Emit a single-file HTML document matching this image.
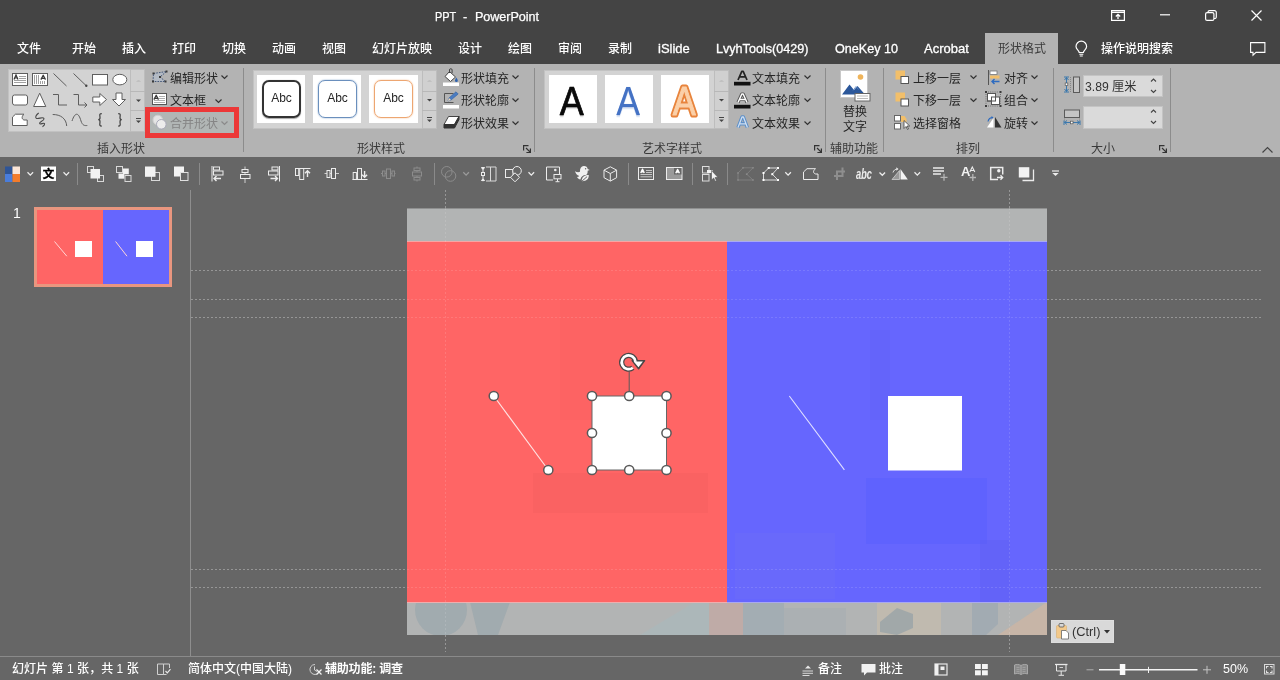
<!DOCTYPE html>
<html lang="zh-CN">
<head>
<meta charset="utf-8">
<title>PPT - PowerPoint</title>
<style>
*{box-sizing:border-box;margin:0;padding:0}
html,body{width:1280px;height:680px;overflow:hidden;background:#666;}
body{position:relative;font-family:"Liberation Sans","Noto Sans CJK SC",sans-serif;font-size:13px;color:#fff;}
.abs,.abs *{position:absolute}
.t{position:absolute;white-space:nowrap;line-height:20px;height:20px;will-change:transform}
#titlebar{position:absolute;left:0;top:0;width:1280px;height:64px;background:#444}
#ribbon{position:absolute;left:0;top:64px;width:1280px;height:93px;background:#b3b3b3;color:#262626}
#ribbon .t{font-size:12px}
#tabs .t,#status .t{font-weight:500}
.sep{position:absolute;width:1px;background:#8c8c8c;top:4px;height:84px}
.glabel{position:absolute;will-change:transform;top:75px;font-size:12px;color:#3a3a3a;white-space:nowrap;transform:translateX(-50%);line-height:20px}
.wa{position:absolute;top:11px;width:48px;height:48px;font-size:40px;line-height:50px;text-align:center}
.chev{position:absolute;width:7px;height:4px}
svg{position:absolute;overflow:visible}
#qat{position:absolute;left:0;top:157px;width:1280px;height:33px}
.qsep{position:absolute;width:1px;background:#8a8a8a;top:6px;height:22px}
#status{position:absolute;left:0;top:656px;width:1280px;height:24px;border-top:1px solid #8a8a8a;font-size:13px}
#status .t{top:2px}
</style>
</head>
<body>

<!-- ============ TITLE BAR + TABS ============ -->
<div id="titlebar">
  <div class="t" id="wtitle" style="-webkit-text-stroke:.25px #fff;left:0;top:7px;font-size:12.600px;width:600px"><span style="position:absolute;left:434.500px;transform:scaleX(.87);transform-origin:left">PPT</span><span style="position:absolute;left:463px">-</span><span style="position:absolute;left:475px;letter-spacing:-.05px">PowerPoint</span></div>
<!--WCS-->
  <svg style="left:1111px;top:10px" width="14" height="11" viewBox="0 0 14 11" fill="none" stroke="#fff">
    <rect x=".6" y=".6" width="12.800" height="9.800" stroke-width="1.200"/><path d="M.6 2.300h12.800" stroke-width="1.400"/>
    <path d="M7 9V4.500M4.800 6.500L7 4.300l2.200 2.200" stroke-width="1.300"/>
  </svg>
  <svg style="left:1160px;top:14px" width="10" height="2" viewBox="0 0 10 2"><path d="M0 .8h10" stroke="#fff" stroke-width="1.200"/></svg>
  <svg style="left:1205px;top:10px" width="12" height="11" viewBox="0 0 12 11" fill="none" stroke="#fff" stroke-width="1.200">
    <rect x=".6" y="2.600" width="8.300" height="7.800" rx="1.500"/>
    <path d="M3 2.500V2A1.500 1.500 0 0 1 4.500 .6H9.500A1.800 1.800 0 0 1 11.300 2.400V7A1.500 1.500 0 0 1 9.800 8.500H9"/>
  </svg>
  <svg style="left:1251px;top:10px" width="11" height="11" viewBox="0 0 11 11" fill="none" stroke="#fff" stroke-width="1.200"><path d="M.5 .5l10 10M10.500 .5l-10 10"/></svg>
<!--WCE-->
  <div id="tabs">
    <div class="t" style="left:17px;top:39px;font-size:12px">文件</div>
    <div class="t" style="left:72px;top:39px;font-size:12px">开始</div>
    <div class="t" style="left:122px;top:39px;font-size:12px">插入</div>
    <div class="t" style="left:172px;top:39px;font-size:12px">打印</div>
    <div class="t" style="left:222px;top:39px;font-size:12px">切换</div>
    <div class="t" style="left:272px;top:39px;font-size:12px">动画</div>
    <div class="t" style="left:322px;top:39px;font-size:12px">视图</div>
    <div class="t" style="left:372px;top:39px;font-size:12px">幻灯片放映</div>
    <div class="t" style="left:458px;top:39px;font-size:12px">设计</div>
    <div class="t" style="left:508px;top:39px;font-size:12px">绘图</div>
    <div class="t" style="left:558px;top:39px;font-size:12px">审阅</div>
    <div class="t" style="left:608px;top:39px;font-size:12px">录制</div>
    <div class="t" style="left:658px;top:38.500px;-webkit-text-stroke:.3px #fff">iSlide</div>
    <div class="t" style="left:716px;top:38.500px;font-size:12.600px;-webkit-text-stroke:.3px #fff">LvyhTools(0429)</div>
    <div class="t" style="left:835px;top:38.500px;font-size:12.600px;-webkit-text-stroke:.3px #fff">OneKey 10</div>
    <div class="t" style="left:924px;top:38.500px;-webkit-text-stroke:.3px #fff">Acrobat</div>
    <div style="position:absolute;left:985px;top:33px;width:73px;height:31px;background:#b3b3b3"></div>
    <div class="t" style="left:998px;top:39px;font-size:12px;color:#3a3a3a;font-weight:400">形状格式</div>
    <div class="t" style="left:1101px;top:39px;font-size:12px">操作说明搜索</div>
<!--TIS-->
    <svg style="left:1075px;top:41px" width="13" height="16" viewBox="0 0 13 16" fill="none" stroke="#fff" stroke-width="1.200">
      <path d="M4.200 11.500C4.200 9.500 1 8.500 1 5.500A5.300 5.300 0 0 1 11.600 5.500C11.600 8.500 8.400 9.500 8.400 11.500Z"/>
      <path d="M4.300 13.300h4M4.800 15h3" stroke-width="1.100"/>
    </svg>
    <svg style="left:1250px;top:42px" width="16" height="14" viewBox="0 0 16 14" fill="none" stroke="#fff" stroke-width="1.100">
      <path d="M.6 .6h14.300v9.800H6L3 13.200V10.400H.6Z" stroke-linejoin="miter"/>
    </svg>
<!--TIE-->
  </div>
</div>

<!-- ============ RIBBON ============ -->
<div id="ribbon">
<!--G1S-->
  <!-- group 1: insert shapes -->
  <div style="position:absolute;left:8px;top:5px;width:137px;height:63px;background:#d3d3d3;border:1px solid #c2c2c2"></div>
  <div style="position:absolute;left:130px;top:5px;width:15px;height:63px;background:#d0d0d0;border:1px solid #bdbdbd"></div>
  <div style="position:absolute;left:130px;top:27px;width:15px;height:1px;background:#b8b8b8"></div>
  <div style="position:absolute;left:130px;top:46px;width:15px;height:1px;background:#b8b8b8"></div>
  <svg style="left:0;top:0" width="150" height="75" viewBox="0 0 150 75" fill="none" stroke="#5e5e5e" stroke-width="1">
    <!-- row1 -->
    <rect x="12.5" y="9.5" width="15" height="12" fill="#fff"/>
    <path d="M19 12.5h7M19 14.5h7M14 16.5h12M14 18.5h12" stroke="#888" stroke-width=".8"/>
    <path d="M14 15.5l2-4.5 2 4.5M14.8 14h2.4" stroke="#333" stroke-width="1.2"/>
    <rect x="32.500" y="9.500" width="15" height="12" fill="#fff"/>
    <path d="M34.500 11v9M36.500 11v9M38.500 11v9M40.500 17v3M42.500 17v3M44.500 17v3" stroke="#888" stroke-width=".8"/>
    <path d="M40.900 15.600l2.300-4.300 2.300 4.300M41.900 14.300h2.600" stroke="#3a3a3a" stroke-width="1.300" stroke-linejoin="round"/>
    <path d="M53.500 9.500L66.500 22"/>
    <path d="M73.500 9.500L86 21.500"/><circle cx="86.300" cy="21.800" r="1.200" fill="#444" stroke="none"/>
    <rect x="92.500" y="10.500" width="15" height="10.500" fill="#fff"/>
    <ellipse cx="119.800" cy="15.600" rx="7" ry="5.300" fill="#fff"/>
    <!-- row2 -->
    <rect x="12.500" y="31" width="15" height="10" rx="2" fill="#fff"/>
    <path d="M39.700 29.200L45.800 42.500H33.600Z" fill="#fff"/>
    <path d="M53 30.500h5.500v10.500h8.500"/>
    <path d="M73.500 30.500h5v10.500h8M84.500 38.500l2.500 2.500-2.500 2.500"/>
    <path d="M92.800 33h7v-3.500l6.700 6-6.700 6V38h-7Z" fill="#fff"/>
    <path d="M116 29h6v6.500h3.500l-6.500 6.500-6.500-6.500H116Z" fill="#fff"/>
    <!-- row3 -->
    <path d="M12.500 53l3-2.800h8.500c-2.500 2-2.500 5 0 5.800h3.200v5.500H12.500Z" fill="#fff" stroke-linejoin="round"/>
    <path d="M38.700 49C36 51 35 53 36.200 54.200C38 55.600 43 52.300 44 54.500C44.600 57 39 57.600 39.600 59.600C40.200 61 44 58.200 44.600 59.700C44.900 60.600 43.600 62 42.500 62.700" stroke="#4a4a4a" stroke-width="1.100"/>
    <path d="M52.700 50.500c8 0 13.500 4 14 11.500"/>
    <path d="M72 57c3-9 6.500-9 9 0c1.500 4.500 3.500 4.800 6.300 4.500"/>
    <path stroke="#444" stroke-width="1.250" d="M101.800 49.500c-3 0-1.800 2-1.800 4.200c0 1.500-.8 2-1.800 2c1 0 1.800.5 1.800 2c0 2.200-1.200 4.300 1.800 4.300"/>
    <path stroke="#444" stroke-width="1.250" d="M118.200 49.500c3 0 1.800 2 1.800 4.200c0 1.500.8 2 1.800 2c-1 0-1.800.5-1.800 2c0 2.200 1.200 4.300-1.800 4.300"/>
    <!-- scroll buttons -->
    <path d="M136.500 18l2-2 2 2" stroke="#c0c0c0" fill="#c0c0c0"/>
    <path d="M136 35.500h5l-2.500 2.500Z" fill="#444" stroke="none"/>
    <path d="M136 54.500h5" stroke="#444"/><path d="M136 56.500h5l-2.500 2.500Z" fill="#444" stroke="none"/>
  </svg>
  <!-- edit shape -->
  <svg style="left:151px;top:6px" width="18" height="14" viewBox="0 0 18 14" fill="none">
    <path d="M2 11.500L2.500 3.500L15.500 1.500L9 7L14.500 11.500Z" fill="#b3bac4" stroke="#44587a" stroke-width="1" stroke-dasharray="1.600 1.100"/>
    <g fill="#3a3a3a"><rect x="1" y="10.500" width="2" height="2"/><rect x="1.500" y="2.500" width="2" height="2"/><rect x="14.500" y=".5" width="2" height="2"/><rect x="8" y="6" width="2" height="2"/><rect x="13.500" y="10.500" width="2" height="2"/></g>
  </svg>
  <div class="t" style="left:170px;top:5px">编辑形状</div>
  <svg class="chev" style="left:221px;top:11px" viewBox="0 0 7 4"><path d="M.5 .5l3 3 3-3" fill="none" stroke="#333" stroke-width="1.200"/></svg>
  <!-- text box -->
  <svg style="left:152px;top:29px" width="15" height="12" viewBox="0 0 15 12" fill="none">
    <rect x=".5" y=".5" width="14" height="11" fill="#fff" stroke="#555"/>
    <path d="M7 3.500h6M7 5.500h6M2 7.500h11M2 9.500h11" stroke="#999" stroke-width=".8"/>
    <path d="M1.900 6.600l2.300-4.300 2.300 4.300M2.900 5.300h2.600" stroke="#3a3a3a" stroke-width="1.300" stroke-linejoin="round"/>
  </svg>
  <div class="t" style="left:170px;top:27px">文本框</div>
  <svg class="chev" style="left:215px;top:35px" viewBox="0 0 7 4"><path d="M.5 .5l3 3 3-3" fill="none" stroke="#333" stroke-width="1.200"/></svg>
  <!-- merge shapes (disabled) + red highlight -->
  <div style="position:absolute;left:145px;top:43px;width:94px;height:31px;border:5px solid #ec3838;background:#b1b6b5"></div>
  <svg style="left:152px;top:50px" width="16" height="16" viewBox="0 0 16 16" fill="none">
    <circle cx="5.800" cy="6" r="4.800" fill="#e4e4e4" stroke="#cfcfcf"/>
    <circle cx="9.300" cy="10.300" r="4.800" fill="#ececec" stroke="#a9a9b9"/>
  </svg>
  <div class="t" style="left:170px;top:50px;color:#858585">合并形状</div>
  <svg class="chev" style="left:221px;top:57px" viewBox="0 0 7 4"><path d="M.5 .5l3 3 3-3" fill="none" stroke="#8a8a8a" stroke-width="1.200"/></svg>
  <div class="glabel" style="left:121px">插入形状</div>
  <div class="sep" style="left:243px"></div>
<!--G1E-->
<!--G2S-->
  <!-- group 2: shape styles -->
  <div style="position:absolute;left:253px;top:6px;width:184px;height:59px;background:#d3d3d3;border:1px solid #c2c2c2"></div>
  <div style="position:absolute;left:422px;top:6px;width:15px;height:59px;background:#d0d0d0;border:1px solid #bdbdbd"></div>
  <div style="position:absolute;left:422px;top:27px;width:15px;height:1px;background:#b8b8b8"></div>
  <div style="position:absolute;left:422px;top:46px;width:15px;height:1px;background:#b8b8b8"></div>
  <div style="position:absolute;left:257px;top:11px;width:48px;height:48px;background:#fff"></div>
  <div style="position:absolute;left:313px;top:11px;width:48px;height:48px;background:#fff"></div>
  <div style="position:absolute;left:369px;top:11px;width:48.500px;height:48px;background:#fff"></div>
  <div style="position:absolute;left:262px;top:16px;width:39px;height:38px;border:2px solid #333;border-radius:7px;box-shadow:0 .5px 1px rgba(0,0,0,.35)"></div>
  <div style="position:absolute;left:318px;top:16px;width:39px;height:38px;border:1.600px solid #6a8fbd;box-shadow:0 0 1.500px #5b86b8;border-radius:7px"></div>
  <div style="position:absolute;left:374px;top:16px;width:39px;height:38px;border:1.600px solid #eda671;box-shadow:0 0 1.500px #f0a870;border-radius:7px"></div>
  <div class="t" style="left:262px;top:24px;width:39px;text-align:center;color:#262626;font-size:12px">Abc</div>
  <div class="t" style="left:318px;top:24px;width:39px;text-align:center;color:#262626;font-size:12px">Abc</div>
  <div class="t" style="left:374px;top:24px;width:39px;text-align:center;color:#262626;font-size:12px">Abc</div>
  <svg style="left:422px;top:0" width="15" height="70" viewBox="0 0 15 70" fill="none">
    <path d="M5.500 18l2-2 2 2" stroke="#c0c0c0" fill="#c0c0c0"/>
    <path d="M5 35h5l-2.500 2.500Z" fill="#444"/>
    <path d="M5 53.500h5" stroke="#444"/><path d="M5 55.500h5l-2.500 2.500Z" fill="#444"/>
  </svg>
  <!-- shape fill -->
  <svg style="left:443px;top:4px" width="17" height="18" viewBox="0 0 17 18" fill="none">
    <path d="M6.500 3.500L12.500 9L7.500 13.500L2 8.500Z" fill="#fff" stroke="#444" stroke-linejoin="round"/>
    <path d="M6.500 5V2a1.300 1.300 0 0 1 2.600 0v3" stroke="#444"/>
    <path d="M13.300 9.500c1.200 1.800 1.500 2.500 1.500 3.200a1.400 1.400 0 0 1-2.800 0c0-.8.400-1.500 1.300-3.200Z" fill="#2f62ad"/>
    <rect x="0" y="14.500" width="16" height="3.500" fill="#fff"/>
  </svg>
  <div class="t" style="left:461px;top:5px">形状填充</div>
  <svg class="chev" style="left:512px;top:11px" viewBox="0 0 7 4"><path d="M.5 .5l3 3 3-3" fill="none" stroke="#333" stroke-width="1.200"/></svg>
  <!-- shape outline -->
  <svg style="left:443px;top:27px" width="17" height="18" viewBox="0 0 17 18" fill="none">
    <path d="M10.500 2.500H1.500v9h9" stroke="#555"/>
    <path d="M5 10l1-3L13 .8 15.200 3 8 9Z" fill="#4a7cc2" stroke="#2d5fa3" stroke-width=".6"/>
    <path d="M5 10l1-3 2 2Z" fill="#f4d9b8"/>
    <rect x="0" y="14" width="16" height="3.500" fill="#fff"/>
  </svg>
  <div class="t" style="left:461px;top:27px">形状轮廓</div>
  <svg class="chev" style="left:512px;top:34px" viewBox="0 0 7 4"><path d="M.5 .5l3 3 3-3" fill="none" stroke="#333" stroke-width="1.200"/></svg>
  <!-- shape effects -->
  <svg style="left:443px;top:51px" width="17" height="15" viewBox="0 0 17 15" fill="none">
    <path d="M5.500 1.500H16l-4.500 8H1Z" fill="#fff" stroke="#444" stroke-linejoin="round"/>
    <path d="M1 9.500h10.500l4.500-8v3l-4.500 8.500H1Z" fill="#333" stroke="#333" stroke-linejoin="round"/>
  </svg>
  <div class="t" style="left:461px;top:50px">形状效果</div>
  <svg class="chev" style="left:512px;top:57px" viewBox="0 0 7 4"><path d="M.5 .5l3 3 3-3" fill="none" stroke="#333" stroke-width="1.200"/></svg>
  <div class="glabel" style="left:381px">形状样式</div>
  <svg style="left:523px;top:81px" width="8" height="8" viewBox="0 0 8 8" fill="none" stroke="#333" stroke-width="1.200"><path d="M.6 5.500V.6H5.500M3 3l4.200 4.200M7.400 3.500v4h-4"/></svg>
  <div class="sep" style="left:534px"></div>
<!--G2E-->
<!--G3S-->
  <!-- group 3: wordart styles -->
  <div style="position:absolute;left:544px;top:6px;width:185px;height:59px;background:#d3d3d3;border:1px solid #c2c2c2"></div>
  <div style="position:absolute;left:714px;top:6px;width:15px;height:59px;background:#d0d0d0;border:1px solid #bdbdbd"></div>
  <div style="position:absolute;left:714px;top:27px;width:15px;height:1px;background:#b8b8b8"></div>
  <div style="position:absolute;left:714px;top:46px;width:15px;height:1px;background:#b8b8b8"></div>
  <div style="position:absolute;left:549px;top:11px;width:48px;height:48px;background:#fff"></div>
  <div style="position:absolute;left:605px;top:11px;width:48px;height:48px;background:#fff"></div>
  <div style="position:absolute;left:661px;top:11px;width:48px;height:48px;background:#fff"></div>
  <svg style="left:549px;top:11px;will-change:transform" width="160" height="48" viewBox="0 0 160 48" font-family="Liberation Sans, sans-serif" font-size="40" text-anchor="middle">
    <defs><filter id="sh1" x="-20%" y="-20%" width="140%" height="150%"><feGaussianBlur stdDeviation=".8"/></filter></defs>
    <text x="22.900" y="40.600" fill="#000" opacity=".35" filter="url(#sh1)" transform="translate(22.600 0) scale(.9 1) translate(-22.600 0)">A</text>
    <text x="22.900" y="40" fill="#0a0a0a" stroke="#0a0a0a" stroke-width=".7" transform="translate(22.600 0) scale(.9 1) translate(-22.600 0)">A</text>
    <text x="79.200" y="41" font-size="41" fill="#4472c4" opacity=".5" filter="url(#sh1)" transform="translate(79 0) scale(.87 1) translate(-79 0)">A</text>
    <text x="79.200" y="40" font-size="41" fill="#4472c4" transform="translate(79 0) scale(.87 1) translate(-79 0)">A</text>
    <text x="135.200" y="40.400" fill="#e8843c" stroke="#e8843c" stroke-width="5.200" stroke-linejoin="round" transform="translate(135 0) scale(.86 1) translate(-135 0)">A</text>
    <text x="135.200" y="40.400" fill="#fbd0a8" stroke="#fbd0a8" stroke-width="1" stroke-linejoin="round" transform="translate(135 0) scale(.86 1) translate(-135 0)">A</text>
  </svg>
  <svg style="left:714px;top:0" width="15" height="70" viewBox="0 0 15 70" fill="none">
    <path d="M5.500 18l2-2 2 2" stroke="#c0c0c0" fill="#c0c0c0"/>
    <path d="M5 35h5l-2.500 2.500Z" fill="#444"/>
    <path d="M5 53.500h5" stroke="#444"/><path d="M5 55.500h5l-2.500 2.500Z" fill="#444"/>
  </svg>
  <!-- text fill -->
  <svg style="left:734px;top:5px" width="17" height="17" viewBox="0 0 17 17" fill="none">
    <path d="M4 11L7.800 2.300h1.400L13 11M5.600 7.900h5.800" stroke="#222" stroke-width="1.700" stroke-linejoin="round"/>
    <rect x="0" y="12.800" width="16.500" height="3.700" fill="#111"/>
  </svg>
  <div class="t" style="left:752px;top:5px">文本填充</div>
  <svg class="chev" style="left:804px;top:11px" viewBox="0 0 7 4"><path d="M.5 .5l3 3 3-3" fill="none" stroke="#333" stroke-width="1.200"/></svg>
  <!-- text outline -->
  <svg style="left:734px;top:28px" width="17" height="17" viewBox="0 0 17 17" fill="none">
    <path d="M4 10.500L7.800 2h1.400L13 10.500M5.800 7.500h5.400" stroke="#555" stroke-width="3.200" stroke-linejoin="round"/>
    <path d="M4 10.500L7.800 2h1.400L13 10.500M5.800 7.500h5.400" stroke="#fff" stroke-width="1.400" stroke-linejoin="round"/>
    <rect x="0" y="12.800" width="16.500" height="3.700" fill="#111"/>
  </svg>
  <div class="t" style="left:752px;top:27px">文本轮廓</div>
  <svg class="chev" style="left:804px;top:34px" viewBox="0 0 7 4"><path d="M.5 .5l3 3 3-3" fill="none" stroke="#333" stroke-width="1.200"/></svg>
  <!-- text effects -->
  <svg style="left:735px;top:50px" width="16" height="17" viewBox="0 0 16 17" fill="none">
    <path d="M3 13.500L7 3h1.400L12.400 13.500M4.800 9.800h5.800" stroke="#4b88cc" stroke-width="3.400" stroke-linejoin="round" opacity=".85"/>
    <path d="M3 13.500L7 3h1.400L12.400 13.500M4.800 9.800h5.800" stroke="#cfdff2" stroke-width="1.300" stroke-linejoin="round"/>
  </svg>
  <div class="t" style="left:752px;top:50px">文本效果</div>
  <svg class="chev" style="left:804px;top:57px" viewBox="0 0 7 4"><path d="M.5 .5l3 3 3-3" fill="none" stroke="#333" stroke-width="1.200"/></svg>
  <div class="glabel" style="left:672px">艺术字样式</div>
  <svg style="left:814px;top:81px" width="8" height="8" viewBox="0 0 8 8" fill="none" stroke="#333" stroke-width="1.200"><path d="M.6 5.500V.6H5.500M3 3l4.200 4.200M7.400 3.500v4h-4"/></svg>
  <div class="sep" style="left:825px"></div>
<!--G3E-->
<!--G4S-->
  <!-- group 4: accessibility -->
  <svg style="left:840px;top:6px" width="31" height="32" viewBox="0 0 31 32" fill="none">
    <rect x=".5" y=".5" width="27" height="27" fill="#fff" stroke="#c8c8c8"/>
    <circle cx="20.500" cy="7" r="2.800" fill="#efb45b"/>
    <path d="M2 24.500L9.500 14.500L14 20L17.500 16L25 24.500Z" fill="#2b579a"/>
    <path d="M13 20.500l3-4 2.500 3" stroke="#5b86c4" stroke-width=".8" fill="none"/>
    <rect x="15" y="23.500" width="15" height="7.500" fill="#fff" stroke="#666"/>
    <path d="M17 26h11M17 28.500h11" stroke="#aaa" stroke-width=".8"/>
  </svg>
  <div class="t" style="left:843px;top:38px">替换</div>
  <div class="t" style="left:843px;top:53px">文字</div>
  <div class="glabel" style="left:854px">辅助功能</div>
  <div class="sep" style="left:883px"></div>
<!--G4E-->
<!--G5S-->
  <!-- group 5: arrange -->
  <svg style="left:894px;top:5px" width="16" height="16" viewBox="0 0 16 16" fill="none">
    <rect x="1.500" y="1.500" width="9.500" height="9" fill="#f2bf6a"/>
    <rect x="7" y="7.500" width="7.500" height="7" fill="#fff" stroke="#555"/>
  </svg>
  <div class="t" style="left:913px;top:5px">上移一层</div>
  <svg class="chev" style="left:970px;top:11px" viewBox="0 0 7 4"><path d="M.5 .5l3 3 3-3" fill="none" stroke="#333" stroke-width="1.200"/></svg>
  <svg style="left:894px;top:27px" width="16" height="16" viewBox="0 0 16 16" fill="none">
    <rect x="1.500" y="1.500" width="9.500" height="9" fill="#f2bf6a"/>
    <rect x="7" y="8" width="7.500" height="7" fill="#fff" stroke="#555"/>
  </svg>
  <div class="t" style="left:913px;top:27px">下移一层</div>
  <svg class="chev" style="left:970px;top:34px" viewBox="0 0 7 4"><path d="M.5 .5l3 3 3-3" fill="none" stroke="#333" stroke-width="1.200"/></svg>
  <svg style="left:893px;top:50px" width="17" height="17" viewBox="0 0 17 17" fill="none">
    <rect x="1.500" y="1.500" width="6" height="5.500" fill="#fff" stroke="#666"/>
    <rect x="1.500" y="9.500" width="6" height="5.500" fill="#fff" stroke="#666"/>
    <path d="M8 2h3.500l2 3v3H8Z" fill="#f2bf6a"/>
    <path d="M11 6.500v8l2-2 1.500 3 1-.5-1.400-3h2.600Z" fill="#fff" stroke="#444" stroke-width=".8" stroke-linejoin="round"/>
  </svg>
  <div class="t" style="left:913px;top:50px">选择窗格</div>
  <!-- align -->
  <svg style="left:986px;top:5px" width="16" height="17" viewBox="0 0 16 17" fill="none">
    <path d="M2.500 1v15" stroke="#555"/>
    <rect x="4" y="2" width="7" height="3.500" fill="#fff" stroke="#777" stroke-width=".8"/>
    <rect x="4" y="6.500" width="9.500" height="3" fill="#f2bf6a"/>
    <path d="M13.500 12.500H6M8.500 10l-2.500 2.500 2.500 2.500" stroke="#2d6bc0" stroke-width="1.400"/>
  </svg>
  <div class="t" style="left:1004px;top:5px">对齐</div>
  <svg class="chev" style="left:1031px;top:11px" viewBox="0 0 7 4"><path d="M.5 .5l3 3 3-3" fill="none" stroke="#333" stroke-width="1.200"/></svg>
  <!-- group -->
  <svg style="left:985px;top:27px" width="18" height="17" viewBox="0 0 18 17" fill="none">
    <rect x="2.500" y="2.500" width="8" height="7.500" fill="#fff" stroke="#555"/>
    <rect x="6.500" y="6" width="8" height="7.500" fill="#fff" stroke="#555"/>
    <rect x="2.500" y="2.500" width="8" height="7.500" stroke="#555"/>
    <g fill="#3a3a3a"><rect x="0" y="0" width="2" height="2"/><rect x="14.500" y="0" width="2" height="2"/><rect x="0" y="14" width="2" height="2"/><rect x="14.500" y="14" width="2" height="2"/></g>
    <path d="M3 1h10.500M1 3v10M3 15h10.500M15.500 3v10" stroke="#555" stroke-width=".7" stroke-dasharray="1 1.200"/>
  </svg>
  <div class="t" style="left:1004px;top:27px">组合</div>
  <svg class="chev" style="left:1031px;top:34px" viewBox="0 0 7 4"><path d="M.5 .5l3 3 3-3" fill="none" stroke="#333" stroke-width="1.200"/></svg>
  <!-- rotate -->
  <svg style="left:986px;top:52px" width="17" height="13" viewBox="0 0 17 13" fill="none">
    <path d="M7.500 11.500H1L7.500 2Z" fill="#fff"/>
    <path d="M9 11.500h6.500L9 1Z" fill="#333"/>
    <path d="M2 5.500c.5-2.500 2.500-4 5-4" stroke="#2d6bc0" stroke-width="1.200"/><path d="M5.500 0l2 1.500-2 1.500Z" fill="#2d6bc0"/>
  </svg>
  <div class="t" style="left:1004px;top:50px">旋转</div>
  <svg class="chev" style="left:1031px;top:57px" viewBox="0 0 7 4"><path d="M.5 .5l3 3 3-3" fill="none" stroke="#333" stroke-width="1.200"/></svg>
  <div class="glabel" style="left:968px">排列</div>
  <div class="sep" style="left:1053px"></div>
<!--G5E-->
<!--G6S-->
  <!-- group 6: size -->
  <svg style="left:1063px;top:12px" width="18" height="18" viewBox="0 0 18 18" fill="none">
    <path d="M3.500 1.500v14M1 1h5M1 16h5" stroke="#3b78ad" stroke-width="1"/>
    <path d="M1.500 4l2-2.500 2 2.500M1.500 13l2 2.500 2-2.500" stroke="#3b78ad" stroke-width="1"/>
    <rect x="2.200" y="7" width="2.600" height="2.600" fill="#fff" stroke="#555" stroke-width=".7"/>
    <path d="M7.500 1v15.500" stroke="#888" stroke-dasharray="1 1"/>
    <rect x="10.500" y="1" width="6" height="15.500" fill="#c4c4c4" stroke="#5a5a5a"/>
  </svg>
  <div style="position:absolute;left:1082.500px;top:10.500px;width:80.500px;height:22.500px;background:#dadada;border:1px solid #c4c4c4"></div>
  <div class="t" style="left:1085px;top:13px;font-size:12.200px;color:#333">3.89 厘米</div>
  <svg style="left:1150px;top:13px" width="8" height="18" viewBox="0 0 8 18" fill="none" stroke="#444" stroke-width="1.100"><path d="M1 4.500l2.500-2.500 2.500 2.500M1 13l2.500 2.500 2.500-2.500"/></svg>
  <svg style="left:1063px;top:44px" width="18" height="18" viewBox="0 0 18 18" fill="none">
    <rect x="1.500" y="2" width="15" height="7.500" fill="#c4c4c4" stroke="#5a5a5a"/>
    <path d="M1.500 10.500v3M16.500 10.500v3" stroke="#888" stroke-dasharray="1 1"/>
    <path d="M1.500 14.500h15M1 12.500v4.500M17 12.500v4.500" stroke="#3b78ad"/>
    <path d="M4 12.500l-2.500 2 2.500 2M14 12.500l2.500 2-2.500 2" stroke="#3b78ad"/>
    <rect x="7.400" y="13.200" width="2.600" height="2.600" fill="#fff" stroke="#555" stroke-width=".7"/>
  </svg>
  <div style="position:absolute;left:1082.500px;top:42.250px;width:80.500px;height:22.500px;background:#dadada;border:1px solid #c4c4c4"></div>
  <svg style="left:1150px;top:44px" width="8" height="18" viewBox="0 0 8 18" fill="none" stroke="#444" stroke-width="1.100"><path d="M1 4.500l2.500-2.500 2.500 2.500M1 13l2.500 2.500 2.500-2.500"/></svg>
  <div class="glabel" style="left:1103px">大小</div>
  <svg style="left:1159px;top:81px" width="8" height="8" viewBox="0 0 8 8" fill="none" stroke="#333" stroke-width="1.200"><path d="M.6 5.500V.6H5.500M3 3l4.200 4.200M7.400 3.500v4h-4"/></svg>
  <div class="sep" style="left:1170px"></div>
  <svg style="left:1262px;top:83px" width="11" height="6" viewBox="0 0 11 6" fill="none" stroke="#444" stroke-width="1.200"><path d="M.5 5.500l5-5 5 5"/></svg>
<!--G6E-->
</div>

<!-- ============ QUICK ACCESS TOOLBAR ============ -->
<div id="qat">
<!--QATS-->
  <svg style="left:0;top:0" width="1080" height="33" viewBox="0 157 1080 33" fill="none" stroke="#ececec" stroke-width="1">
    <!-- palette -->
    <g stroke="none">
      <rect x="5" y="166.500" width="7.500" height="7.500" fill="#2f5597"/><rect x="12.500" y="166.500" width="7.500" height="7.500" fill="#fbe5d6"/>
      <rect x="5" y="174" width="7.500" height="8" fill="#4a7ddb"/><rect x="12.500" y="174" width="7.500" height="8" fill="#f47c2b"/>
    </g>
    <path d="M27.500 172.300l2.800 2.800 2.800-2.800" stroke-width="1.300"/>
    <rect x="41" y="166.500" width="15" height="14.500" fill="#fff" stroke="none"/>
    <path d="M63.500 172.300l2.800 2.800 2.800-2.800" stroke-width="1.300"/>
    <!-- bring to front -->
    <rect x="87.500" y="166.500" width="6" height="6" stroke="#d8d8d8"/>
    <rect x="97.500" y="175.500" width="6" height="6" stroke="#d8d8d8"/>
    <rect x="90.500" y="169" width="9.500" height="9.500" fill="#f2f2f2" stroke="none"/>
    <!-- send to back -->
    <rect x="116.500" y="166.500" width="6" height="6" stroke="#d8d8d8"/>
    <rect x="125" y="175.500" width="6" height="6" stroke="#d8d8d8"/>
    <rect x="123" y="168.500" width="5.800" height="5.800" fill="#f2f2f2" stroke="none"/>
    <rect x="118.500" y="173.500" width="5.800" height="5.200" fill="#f2f2f2" stroke="none"/>
    <!-- bring forward -->
    <rect x="151.500" y="172.500" width="8" height="8" stroke="#d8d8d8"/>
    <rect x="145" y="166.500" width="10.500" height="10.300" fill="#f2f2f2" stroke="none"/>
    <!-- send backward -->
    <rect x="174" y="166.500" width="10" height="10" fill="#f2f2f2" stroke="none"/>
    <rect x="180.500" y="172.500" width="7.500" height="8" fill="#666" stroke="#e0e0e0"/>
    <!-- align left -->
    <path d="M212 166v15.500" />
    <rect x="213.500" y="167" width="6" height="3"/><rect x="213.500" y="171" width="9.500" height="4"/>
    <path d="M221 178.500h-7M216.500 176l-2.500 2.500 2.500 2.500" stroke-width="1.400"/>
    <!-- align center -->
    <path d="M245 166.500v16.500" stroke="#cfcfcf"/>
    <rect x="242" y="169.500" width="6" height="3" fill="#666"/><rect x="240.500" y="174.500" width="9.500" height="4" fill="#666"/>
    <!-- align right -->
    <path d="M279.500 166v15.500"/>
    <rect x="272" y="167" width="6" height="3"/><rect x="268.500" y="171" width="9.500" height="4"/>
    <path d="M270.500 178.500h7M275 176l2.500 2.500-2.500 2.500" stroke-width="1.400"/>
    <!-- align top -->
    <path d="M295 168.500h15.500"/>
    <rect x="295.500" y="168.500" width="3.200" height="7"/><rect x="299.700" y="168.500" width="4" height="11"/>
    <path d="M307.500 177v-6M305 173.200l2.500-2.500 2.500 2.500" stroke-width="1.400"/>
    <!-- align middle -->
    <path d="M324.500 173.500h14.500" stroke="#cfcfcf"/>
    <rect x="327" y="170.500" width="3" height="7" fill="#666"/><rect x="331.500" y="168.500" width="4" height="10" fill="#666"/>
    <!-- align bottom -->
    <path d="M352.500 179.500h15"/>
    <rect x="353.200" y="172.500" width="3.200" height="7"/><rect x="357.500" y="168.500" width="4" height="11"/>
    <path d="M364.600 171v6M362.100 174.800l2.500 2.500 2.500-2.500" stroke-width="1.400"/>
    <!-- distribute h (dim) -->
    <g stroke="#8c8c8c"><path d="M381 173.500h14.500"/><rect x="382.500" y="171" width="2.500" height="5" fill="#666"/><rect x="386.500" y="169" width="4" height="9.500" fill="#666"/><rect x="392" y="171" width="2.500" height="5" fill="#666"/></g>
    <!-- distribute v (dim) -->
    <g stroke="#8c8c8c"><path d="M417 166.500v15"/><rect x="414" y="168" width="6" height="2.500" fill="#666"/><rect x="412.500" y="172" width="9" height="4" fill="#666"/><rect x="414" y="177.500" width="6" height="2.500" fill="#666"/></g>
    <!-- merge (dim) -->
    <g stroke="#8c8c8c"><circle cx="446.800" cy="171.800" r="5.300"/><circle cx="450.500" cy="176" r="5.300"/></g>
    <path d="M463.300 172.300l2.800 2.800 2.800-2.800" stroke="#9a9a9a" stroke-width="1.300"/>
    <!-- size -->
    <path d="M483 168v12.500M481.200 167.500h3.600M481.200 180.500h3.600" />
    <rect x="481.500" y="172.500" width="3" height="3" fill="#666"/>
    <circle cx="483" cy="168.300" r="1.300" fill="#ececec" stroke="none"/><circle cx="483" cy="180" r="1.300" fill="#ececec" stroke="none"/>
    <path d="M486 167h10v14h-10" stroke="#d8d8d8"/><path d="M490.500 167v14" stroke="#d8d8d8"/>
    <!-- shapes -->
    <rect x="505.500" y="169.500" width="7.500" height="8"/>
    <circle cx="517" cy="170.800" r="4.300" fill="#666"/>
    <path d="M515 172.800l4.500 4.500-4.500 4.500-4.500-4.500Z" fill="#666"/>
    <path d="M528.500 172.300l2.800 2.800 2.800-2.800" stroke-width="1.300"/>
    <!-- screen -->
    <path d="M553 180h-6.500v-13h13v7" />
    <rect x="554" y="174.500" width="7" height="4.300" fill="#666"/>
    <path d="M557.500 179v2.500M555.500 181.700h4" />
    <circle cx="555.300" cy="170" r="1.300" fill="#ececec" stroke="none"/>
    <!-- bird/leaf -->
    <path d="M575 171.200c1.600 1 3.400 1.200 5 .6c-.3-3.200 1.200-5.500 3.700-5.800c2.200-.2 3.700 1.200 4 2.900l2 1l-2.100.9c.3 1.800-.3 3.300-1.500 4.300c-2.500-.3-5 1.300-5.700 4.500c-1.300-.3-2.500-1.200-3.400-2.600c1-.1 1.800-.5 2.300-1.100c-2.300-.8-3.700-2.400-4.300-4.700Z" fill="#f0f0f0" stroke="none"/>
    <path d="M581.800 181.300c-.3-3.800 2.400-6.300 7-6.200c.2 3.900-2.400 6.300-7 6.200Z" fill="#f0f0f0" stroke="none"/>
    <path d="M580.800 182.200l6.300-5.600" stroke="#666" stroke-width="1"/>
    <circle cx="585.600" cy="168.800" r=".7" fill="#666" stroke="none"/>
    <!-- cube -->
    <path d="M610.300 166.800l6.300 3.300v7.600l-6.300 3.400-6.300-3.400v-7.600Z"/>
    <path d="M604 170.200l6.300 3.300 6.300-3.300M610.300 173.500v7.500" />
    <!-- text box 1 -->
    <rect x="638.500" y="167.500" width="15" height="12"/>
    <path d="M646 170.500h6M646 172.500h6M640.500 174.500h11.500M640.500 176.800h11.500" stroke="#d0d0d0" stroke-width=".9"/>
    <path d="M640.800 173l1.700-3.800 1.700 3.800M641.500 171.800h2" stroke="#fff" stroke-width="1.500" stroke-linejoin="round"/>
    <!-- text box 2 -->
    <rect x="666.500" y="167.500" width="15.500" height="12" fill="#9a9a9a"/>
    <rect x="674" y="168" width="7.500" height="6.500" fill="#666" stroke="none"/><path d="M675.800 173.300l1.800-3.800 1.800 3.800M676.500 172.100h2.200" stroke="#fff" stroke-width="1.500" stroke-linejoin="round"/>
    <!-- select pane -->
    <rect x="702.500" y="166.500" width="6.500" height="6.500" stroke="#dcdcdc"/>
    <rect x="702.500" y="174.500" width="6.500" height="6.500" stroke="#dcdcdc"/>
    <path d="M707 170h5.500v3H707Z" fill="#f0f0f0" stroke="none"/>
    <path d="M711.500 170.500v9.500l2.200-2 1.500 3.300 1.300-.6-1.500-3.200h3Z" fill="#f4f4f4" stroke="#555" stroke-width=".6"/>
    <!-- edit points dim -->
    <g stroke="#7e7e7e"><path d="M738 180v-7l5-5.200h10l-6.300 6.400 6.300 5.800Z"/><g fill="#8a8a8a" stroke="none"><rect x="737.200" y="179.200" width="1.600" height="1.600"/><rect x="737.200" y="172.200" width="1.600" height="1.600"/><rect x="742.200" y="167" width="1.600" height="1.600"/><rect x="752.200" y="167" width="1.600" height="1.600"/><rect x="745.900" y="173.400" width="1.600" height="1.600"/><rect x="752.200" y="179.200" width="1.600" height="1.600"/></g></g>
    <!-- edit points -->
    <path d="M763.500 180v-7l5.200-5h9.300l-5.700 6.200 5.700 5.800Z" stroke="#dcdcdc"/>
    <g fill="#fff" stroke="none"><rect x="762.500" y="179" width="2" height="2"/><rect x="762.500" y="172" width="2" height="2"/><rect x="767.700" y="167" width="2" height="2"/><rect x="777" y="167" width="2" height="2"/><rect x="771.300" y="173.200" width="2" height="2"/><rect x="777" y="179" width="2" height="2"/></g>
    <path d="M785.300 172.300l2.800 2.800 2.800-2.800" stroke-width="1.300"/>
    <!-- freeform -->
    <path d="M803.500 172l3.500-3.300h8.500c-2.800 2.200-2.500 4.500.2 5.300h2.300v5.500h-14.500Z" stroke-linejoin="round"/>
    <!-- crop dim -->
    <g stroke="#8e8e8e" stroke-width="2"><path d="M834 176h8.500v-8.500M837 180v-8.500h8"/></g>
    <!-- rotate -->
    <path d="M899.500 179.500H892l7.500-9Z" fill="#999" stroke="#cfcfcf" stroke-width=".8"/>
    <path d="M900.500 179.500h7.300l-7.300-10.500Z" fill="#f4f4f4" stroke="none"/>
    <path d="M893 172.500c.6-2.200 2.200-3.400 4.500-3.500" stroke="#e4e4e4"/><path d="M896.300 167.300l2.200 1.700-2.200 1.700Z" fill="#e4e4e4" stroke="none"/>
    <path d="M914.500 172.300l2.800 2.800 2.800-2.800" stroke-width="1.300"/>
    <!-- lines + -->
    <path d="M933 168h11M933 171h11M933 174h8" stroke-width="1.500"/>
    <path d="M944 173.800v7M940.500 177.300h7" stroke="#b5b5b5" stroke-width="1.300"/>
    <!-- A A+ -->
    <path d="M969.800 172l2.500-5 2.500 5M970.800 170.500h3" stroke-width="1.100"/>
    <path d="M972.800 174v7M969.500 177.500h6.500" stroke="#b5b5b5" stroke-width="1.300"/>
    <!-- picture -->
    <path d="M998 179.500h-7.300v-12h12v7" stroke-width="1.500"/>
    <circle cx="998.800" cy="170.800" r="1.700" fill="#f0f0f0" stroke="none"/>
    <path d="M997 177.500h5.500M1000.500 175.300l2.200 2.200-2.200 2.200" stroke-width="1.300"/>
    <!-- stack -->
    <path d="M1022.500 180.500h11v-11" stroke-width="1.300"/>
    <rect x="1018.800" y="167.200" width="10.500" height="10.300" fill="#f2f2f2" stroke="none"/>
    <!-- qat dropdown -->
    <path d="M1052 171h7" stroke-width="1.200"/><path d="M1052.300 173h6.400l-3.200 3Z" fill="#ececec" stroke="none"/>
  </svg>
  <div class="t" style="left:41px;top:6.500px;width:15px;text-align:center;color:#000;font-weight:bold;-webkit-text-stroke:.35px #000;font-size:11.500px;line-height:20px">文</div>
  <div class="t" style="left:856px;top:6.500px;font-size:14px;font-weight:bold;font-style:italic;color:#f0f0f0;transform:scaleX(.66);transform-origin:left">abc</div>
  <div class="t" style="left:961px;top:5px;font-size:13px;font-weight:bold;color:#f2f2f2">A</div>
    <svg style="left:878.500px;top:15px" width="7" height="4" viewBox="0 0 7 4" fill="none"><path d="M.5 .5l2.800 2.800 2.800-2.800" stroke="#ececec" stroke-width="1.300"/></svg>
  <div class="qsep" style="left:77px"></div>
  <div class="qsep" style="left:199px"></div>
  <div class="qsep" style="left:434px"></div>
  <div class="qsep" style="left:628px"></div>
  <div class="qsep" style="left:692px"></div>
  <div class="qsep" style="left:727px"></div>
<!--QATE-->
</div>

<!-- ============ WORKSPACE ============ -->
<div id="work">
<!--WORKS-->
  <div style="position:absolute;left:190px;top:190px;width:1px;height:466px;background:#8e8e8e"></div>
  <div class="t" style="left:13px;top:203px;font-size:14px;color:#fff">1</div>
  <!-- thumbnail -->
  <div style="position:absolute;left:34px;top:207px;width:138px;height:80px;background:#e9967f"></div>
  <div style="position:absolute;left:37px;top:210px;width:66px;height:74px;background:#ff6565"></div>
  <div style="position:absolute;left:103px;top:210px;width:66px;height:74px;background:#6666fe"></div>
  <div style="position:absolute;left:75px;top:241px;width:17px;height:16px;background:#fff"></div>
  <div style="position:absolute;left:136px;top:241px;width:16.500px;height:16px;background:#fff"></div>
  <svg style="left:0;top:190px" width="190" height="110" viewBox="0 190 190 110" fill="none"><path d="M54.500 241.500L66.800 256.200M115.600 241.500L127 256.200" stroke="#ffd6d6" stroke-width="1"/></svg>
  <!-- slide -->
  <div id="slide" style="position:absolute;left:407px;top:208px;width:640px;height:427px;background:#b2b4b4;overflow:hidden">
    <div style="position:absolute;left:0;top:0;width:640px;height:1px;background:#8f9090"></div>
    <div style="position:absolute;left:0;top:33px;width:320px;height:362px;background:#ff6565;border-top:1px solid #f7a5a3;border-bottom:1px solid #efaeae"></div>
    <div style="position:absolute;left:320px;top:33px;width:320px;height:362px;background:#6666fe;border-top:1px solid #a9a9f5;border-bottom:1px solid #a9a9f0"></div>
    <svg style="left:0;top:34px" width="640" height="360" viewBox="407 242 640 360">
      <rect x="533" y="473" width="175" height="40" fill="#e85a5a" opacity=".22"/>
      <rect x="560" y="300" width="90" height="120" fill="#f05c5c" opacity=".12"/>
      <path d="M470 520h120v82h-120Z" fill="#ff7070" opacity=".2"/>
      <rect x="866" y="478" width="121" height="66" fill="#5058ff" opacity=".3"/>
      <rect x="735" y="533" width="100" height="66" fill="#7272f4" opacity=".3"/>
      <rect x="980" y="540" width="30" height="62" fill="#5a5ae8" opacity=".25"/>
      <rect x="870" y="330" width="20" height="90" fill="#6060f0" opacity=".25"/>
    </svg>
    <svg style="left:0;top:395px;overflow:hidden" width="640" height="32" viewBox="407 603 640 32">
      <circle cx="441" cy="610" r="26" fill="#9aa7ad" opacity=".7"/>
      <path d="M470 602h40l-12 33h-20Z" fill="#9aa7ad" opacity=".7"/>
      <path d="M640 635l55-33h15v33Z" fill="#a9b9bd" opacity=".6"/>
      <rect x="709" y="602" width="34" height="33" fill="#c3a8a3" opacity=".75"/>
      <rect x="743" y="602" width="41" height="33" fill="#9fabb3" opacity=".8"/>
      <rect x="784" y="608" width="62" height="27" fill="#a8aeb2" opacity=".7"/>
      <rect x="877" y="602" width="64" height="33" fill="#c4bcae" opacity=".75"/>
      <path d="M880 622l17-14 16 6v14l-16 7-17-3Z" fill="#9ba4a8" opacity=".85"/>
      <path d="M972 602h26v22l-12 11h-14Z" fill="#9ea9b1" opacity=".8"/>
      <path d="M998 635l49-33v33Z" fill="#cdb5a3" opacity=".75"/>
    </svg>
  </div>
  <!-- guides -->
  <svg style="left:0;top:190px" width="1280" height="466" viewBox="0 190 1280 466" fill="none">
    <g stroke="#969696" stroke-width="1" stroke-dasharray="2 2">
      <path d="M191 270.500H407M1047 270.500H1263M191 299.500H407M1047 299.500H1263M191 317.500H407M1047 317.500H1263M191 569.500H407M1047 569.500H1263M191 587.500H407M1047 587.500H1263"/>
      <path d="M445.500 190V208M445.500 635V652M1009.500 190V208M1009.500 635V652"/>
    </g>
    <g stroke="#ffffff" stroke-opacity=".13" stroke-width="1" stroke-dasharray="2 2">
      <path d="M407 270.500H1047M407 299.500H1047M407 317.500H1047M407 569.500H1047M407 587.500H1047"/>
      <path d="M445.500 208V635M1009.500 208V635"/>
    </g>
    <!-- shapes on blue -->
    <rect x="888" y="396" width="74" height="74.500" fill="#fff"/>
    <path d="M789.300 396L844.400 469.800" stroke="#e0e0ff" stroke-width="1.100"/>
    <!-- shapes on red -->
    <path d="M493.800 396L548.300 470" stroke="#ffe4e4" stroke-width="1.100"/>
    <rect x="592" y="396" width="74.500" height="74" fill="#fff" stroke="#666" stroke-width="1"/>
    <path d="M629.200 371.500v24" stroke="#5a5a5a" stroke-width="1"/>
    <g fill="#fff" stroke="#595959" stroke-width="1.500">
      <circle cx="493.800" cy="396" r="4.600"/><circle cx="548.300" cy="470" r="4.600"/>
      <circle cx="592" cy="396" r="4.600"/><circle cx="629.200" cy="396" r="4.600"/><circle cx="666.500" cy="396" r="4.600"/>
      <circle cx="592" cy="433" r="4.600"/><circle cx="666.500" cy="433" r="4.600"/>
      <circle cx="592" cy="470" r="4.600"/><circle cx="629.200" cy="470" r="4.600"/><circle cx="666.500" cy="470" r="4.600"/>
    </g>
    <!-- rotate handle -->
    <path d="M632.85 367.74A6.90 6.90 0 1 1 635.48 361.82" stroke="#474747" stroke-width="5.200" fill="none"/>
    <path d="M632.200 360.600H644.600L638.600 368.800Z" fill="#474747" stroke="#474747" stroke-width="1.400" stroke-linejoin="round"/>
    <path d="M632.85 367.74A6.90 6.90 0 1 1 635.48 361.82" stroke="#fff" stroke-width="2.700" fill="none"/>
    <path d="M633.600 361.400H642.900L638.500 367.300Z" fill="#fff"/>
  </svg>
  <!-- paste options -->
  <div style="position:absolute;left:1050.500px;top:620px;width:63px;height:22.500px;background:#d9d9d9;border:1px solid #dedede"></div>
  <svg style="left:1055px;top:622px" width="15" height="18" viewBox="0 0 15 18" fill="none">
    <rect x="1.500" y="3.500" width="10" height="12.500" rx="1" fill="#f3c98b" stroke="#d9b070" stroke-width=".6"/>
    <rect x="4" y="1.500" width="5" height="3.500" rx="1" fill="#d8d8d8" stroke="#555" stroke-width=".8"/>
    <path d="M6.500 8.500h4.500l2.500 2.500v6h-7Z" fill="#fff" stroke="#666" stroke-width=".8"/>
  </svg>
  <div class="t" style="left:1072px;top:621.500px;font-size:12.800px;color:#333">(Ctrl)</div>
  <svg style="left:1104px;top:630px" width="6" height="4" viewBox="0 0 6 4"><path d="M0 0h6l-3 3.500Z" fill="#333"/></svg>
<!--WORKE-->
</div>

<!-- ============ STATUS BAR ============ -->
<div id="status">
<!--STS-->
  <div class="t" style="left:12px;font-size:12px;letter-spacing:.05px">幻灯片 第 1 张，共 1 张</div>
  <div class="t" style="left:187.500px;font-size:12px">简体中文(中国大陆)</div>
  <div class="t" style="left:325px;font-size:12px;font-weight:bold;letter-spacing:-.2px">辅助功能: 调查</div>
  <div class="t" style="left:818px;font-size:12px;font-weight:500">备注</div>
  <div class="t" style="left:878.500px;font-size:12px;font-weight:500">批注</div>
  <div class="t" style="left:1223px;font-size:12.500px">50%</div>
  <svg style="left:0;top:0" width="1280" height="24" viewBox="0 656 1280 24" fill="none" stroke="#e8e8e8" stroke-width="1">
    <!-- spell/book -->
    <path d="M163.500 663v10.500M157.500 663h6v10.500h-6ZM163.500 663h6v4M163.500 673.500h3" stroke="#d0d0d0"/>
    <path d="M165.500 670l1.800 1.800 3.200-3.600" stroke="#e8e8e8" stroke-width="1.200"/>
    <!-- accessibility -->
    <path d="M315 663.500a5 5 0 1 0 3.500 8.500" stroke="#d0d0d0"/>
    <path d="M314.500 665.500v3.500l2.500 1.500" stroke="#d0d0d0"/>
    <path d="M316.500 668.500l5 5M321.500 668.500l-5 5" stroke="#f4f4f4" stroke-width="1.300"/>
    <!-- notes -->
    <path d="M802.500 670h10.500M802.500 672.300h10.500M802.500 674.500h7" stroke="#d8d8d8" stroke-width="1"/>
    <path d="M805 667.500h6l-3-3Z" fill="#e8e8e8" stroke="none"/>
    <!-- comments -->
    <path d="M861.500 663h14v8.500h-8.500l-3 3v-3h-2.500Z" fill="#f2f2f2" stroke="none"/>
    <!-- normal view -->
    <rect x="935" y="663" width="12" height="11" stroke-width="1.200"/>
    <rect x="935" y="663" width="3.500" height="11" fill="#f0f0f0" stroke="none"/>
    <rect x="940.500" y="665.500" width="4" height="3.500" fill="#f0f0f0" stroke="none"/>
    <!-- sorter -->
    <g fill="#f4f4f4" stroke="none"><rect x="975" y="663" width="5.800" height="5"/><rect x="982" y="663" width="5.800" height="5"/><rect x="975" y="669.300" width="5.800" height="5"/><rect x="982" y="669.300" width="5.800" height="5"/></g>
    <!-- reading view -->
    <g stroke="#a8a8a8"><path d="M1021 664.500c-2-1.300-4.500-1.300-6.500-.5v9c2-.8 4.500-.8 6.500.5c2-1.300 4.500-1.300 6.500-.5v-9c-2-.8-4.500-.8-6.500.5ZM1021 664.500v9" fill="#8a8a8a"/><path d="M1016.500 666.500h3M1016.500 668.500h3M1016.500 670.500h3M1022.500 666.500h3M1022.500 668.500h3M1022.500 670.500h3" stroke-width=".7"/></g>
    <!-- slideshow -->
    <path d="M1055 663.500h12.500" stroke-width="1.300"/>
    <path d="M1056.500 664v6h9.500v-6" />
    <path d="M1061.200 670v4M1058.500 674.300h5.500" />
    <path d="M1059.500 666.500h3.500" stroke="#d0d0d0"/>
    <!-- zoom -->
    <path d="M1086.500 668.800h7" stroke="#b0b0b0"/>
    <path d="M1099 668.800h98.500" stroke="#f4f4f4" stroke-width="1.400"/>
    <rect x="1119.800" y="663" width="5.500" height="11" fill="#fafafa" stroke="none"/>
    <path d="M1148.500 665.800v6.200" stroke="#f0f0f0"/>
    <path d="M1203 668.800h8M1207 664.800v8" stroke="#c4c4c4"/>
    <!-- fit -->
    <rect x="1264.500" y="663.500" width="9.500" height="9.500" stroke="#d8d8d8"/>
    <path d="M1266.500 667.500v-2h2M1270 665.500h2v2M1272 669.500v2h-2M1268.500 671.500h-2v-2" stroke="#e0e0e0" stroke-width="1.100"/>
  </svg>
<!--STE-->
</div>

</body>
</html>
